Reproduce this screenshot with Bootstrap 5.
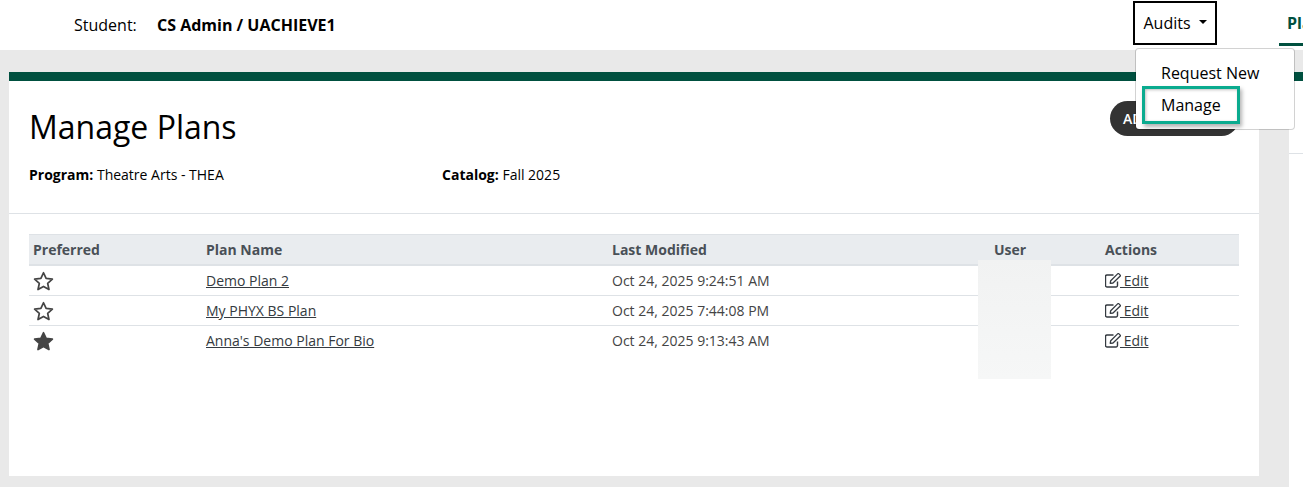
<!DOCTYPE html>
<html lang="en">
<head>
    <meta charset="UTF-8">
    <meta content="width=device-width, initial-scale=1.0" name="viewport">
    <title>Manage Plans</title>
    <link href="https://cdn.jsdelivr.net/npm/bootstrap@5.3.2/dist/css/bootstrap.min.css" rel="stylesheet">
    <style>
        html, body {
            height: 487px;
            overflow: hidden;
        }

        body {
            font-family: "Open Sans", sans-serif;
            font-size: 14px;
            color: #000;
            background-color: #fff;
        }

        .top-bar {
            height: 50px;
            padding-left: 74px;
        }

        .student-label {
            font-size: 16px;
            width: 83px;
        }

        .student-name {
            font-size: 16px;
        }

        .audits-wrap {
            margin-left: auto;
            margin-right: 86px;
            position: relative;
        }

        .audits-btn {
            width: 84px;
            height: 44px;
            margin-bottom: 4px;
            font-size: 16px;
            border: 2px solid #000;
            border-radius: 0;
            color: #000;
            background: #fff;
            padding: 0 0 1px;
        }

        .audits-btn.dropdown-toggle::after {
            margin-left: 8px;
            border-top-width: 4px;
            border-right-width: 4px;
            border-left-width: 4px;
        }

        .audits-menu {
            display: block;
            top: 47px;
            left: 2px;
            width: 160px;
            min-width: 0;
            padding: 8px 0 0;
            height: 82px;
            font-size: 16px;
            border-radius: 4px;
            z-index: 20;
        }

        .audits-menu .dropdown-item {
            padding: 5px 0 0 25px;
            line-height: 22px;
            height: 29px;
            color: #000;
        }

        .audits-menu .manage-item {
            box-sizing: border-box;
            width: 98px;
            height: 38px;
            margin-left: 6px;
            padding: 0 0 0 16px;
            line-height: 32px;
            border: 3px solid #0aab8f;
            box-shadow: 2px 3px 4px rgba(0, 0, 0, .3), inset 1px 1px 3px rgba(0, 0, 0, .25);
            background: #fff;
        }

        .tab-peek {
            position: absolute;
            left: 1279px;
            top: 0;
            width: 24px;
            height: 46px;
            padding-left: 8px;
            overflow: hidden;
            font-size: 16px;
            font-weight: 700;
            color: #00503f;
            line-height: 46px;
            white-space: nowrap;
            border-bottom: 3px solid #00503f;
        }

        .page-area {
            height: 437px;
            background: #e9e9e9;
            padding: 22px 0 11px 9px;
        }

        .plan-panel {
            width: 1250px;
            height: 404px;
            background: #fff;
            border-top: 9px solid #00503f;
            position: relative;
        }

        .side-panel {
            margin-left: 30px;
            margin-bottom: -11px;
            background: #fff;
            border-top: 9px solid #00503f;
            padding-top: 72px;
        }

        .side-rule {
            border-top: 1px solid #dee2e6;
        }

        .panel-head {
            height: 133px;
            padding: 24px 20px 0;
            border-bottom: 1px solid #dee2e6;
        }

        .panel-title {
            font-size: 32px;
            font-weight: 400;
            line-height: 44px;
            margin: 0 0 15px;
        }

        .add-btn {
            height: 35px;
            width: 129px;
            background: #333;
            color: #fff;
            border-radius: 18px;
            font-size: 14px;
            font-weight: 600;
            border: 0;
            padding: 0 0 0 13px;
            text-align: left;
            margin-top: -4px;
        }

        .meta-program {
            width: 413px;
        }

        .plan-wrap {
            padding: 20px 20px 0;
        }

        .plan-table {
            color: #444;
            margin: 0;
            font-size: 14px;
        }

        .plan-table th {
            background: #e9ecef;
            color: #495057;
            font-weight: 700;
            padding: 5px 4px 4px;
            line-height: 20px;
            border-top: 1px solid #dee2e6;
            border-bottom: 2px solid #dee2e6;
        }

        .plan-table th:nth-child(1) { width: 173px; }
        .plan-table th:nth-child(2) { width: 406px; }
        .plan-table th:nth-child(3) { width: 382px; }
        .plan-table th:nth-child(4) { width: 111px; }

        .plan-table td {
            padding: 5px 4px 4px;
            line-height: 20px;
            height: 30px;
            border-bottom: 1px solid #dee2e6;
        }

        .plan-table tr:last-child td {
            border-bottom: 0;
        }

        .plan-table a {
            color: #343a40;
        }

        .star-icon {
            width: 21px;
            height: 20px;
            display: block;
        }

        .edit-icon {
            width: 16px;
            height: 15px;
            vertical-align: -2px;
            margin-right: -1px;
        }

        .redact-box {
            position: absolute;
            left: 969px;
            top: 179px;
            width: 73px;
            height: 119px;
            background: linear-gradient(#f1f2f2, #f6f7f7);
        }
    </style>
</head>
<body>
<svg class="d-none">
    <symbol id="star" viewBox="0 0 24 23">
        <path d="M12 2l3 6.600 7.200.8-5.400 4.800 1.500 7.100L12 17.700l-6.300 3.600 1.500-7.100L1.800 9.400 9 8.600z" stroke-width="2" stroke-linejoin="round"/>
    </symbol>
    <symbol id="edit" viewBox="0 0 16 15">
        <path d="M12.500 8.500v4a1.500 1.500 0 0 1-1.500 1.500H2a1.500 1.500 0 0 1-1.500-1.500v-9A1.500 1.500 0 0 1 2 2h6.500" fill="none" stroke="#343a40" stroke-width="1.400"/>
        <path d="M5.200 10.300l.5-2.600L12.600.9c.4-.4 1-.4 1.400 0l1 1c.4.4.4 1 0 1.400L8 10z" fill="none" stroke="#343a40" stroke-width="1.300" stroke-linejoin="round"/>
    </symbol>
</svg>
<div class="top-bar d-flex align-items-center">
    <span class="student-label">Student:</span>
    <span class="student-name fw-bold">CS Admin / UACHIEVE1</span>
    <div class="audits-wrap dropdown">
        <button class="audits-btn btn dropdown-toggle" type="button">Audits</button>
        <ul class="audits-menu dropdown-menu">
            <li><a class="dropdown-item" href="#">Request New</a></li>
            <li><a class="dropdown-item manage-item" href="#">Manage</a></li>
        </ul>
    </div>
    <div class="tab-peek">Plans</div>
</div>
<div class="page-area d-flex">
    <div class="plan-panel flex-shrink-0">
        <div class="panel-head">
            <div class="d-flex justify-content-between">
                <h1 class="panel-title">Manage Plans</h1>
                <button class="add-btn" type="button">ADD NEW PLAN</button>
            </div>
            <div class="d-flex">
                <div class="meta-program"><strong>Program:</strong> Theatre Arts - THEA</div>
                <div><strong>Catalog:</strong> Fall 2025</div>
            </div>
        </div>
        <div class="plan-wrap">
            <table class="plan-table table table-borderless">
                <thead>
                <tr>
                    <th>Preferred</th>
                    <th>Plan Name</th>
                    <th>Last Modified</th>
                    <th>User</th>
                    <th>Actions</th>
                </tr>
                </thead>
                <tbody>
                <tr>
                    <td><svg class="star-icon" fill="none" stroke="#444"><use href="#star"/></svg></td>
                    <td><a href="#">Demo Plan 2</a></td>
                    <td>Oct 24, 2025 9:24:51 AM</td>
                    <td></td>
                    <td><a href="#"><svg class="edit-icon"><use href="#edit"/></svg> Edit</a></td>
                </tr>
                <tr>
                    <td><svg class="star-icon" fill="none" stroke="#444"><use href="#star"/></svg></td>
                    <td><a href="#">My PHYX BS Plan</a></td>
                    <td>Oct 24, 2025 7:44:08 PM</td>
                    <td></td>
                    <td><a href="#"><svg class="edit-icon"><use href="#edit"/></svg> Edit</a></td>
                </tr>
                <tr>
                    <td><svg class="star-icon" fill="#444" stroke="#444"><use href="#star"/></svg></td>
                    <td><a href="#">Anna's Demo Plan For Bio</a></td>
                    <td>Oct 24, 2025 9:13:43 AM</td>
                    <td></td>
                    <td><a href="#"><svg class="edit-icon"><use href="#edit"/></svg> Edit</a></td>
                </tr>
                </tbody>
            </table>
            <div class="redact-box"></div>
        </div>
    </div>
    <div class="side-panel flex-grow-1">
        <div class="side-rule"></div>
    </div>
</div>
<script src="https://cdn.jsdelivr.net/npm/bootstrap@5.3.2/dist/js/bootstrap.bundle.min.js"></script>
</body>
</html>
